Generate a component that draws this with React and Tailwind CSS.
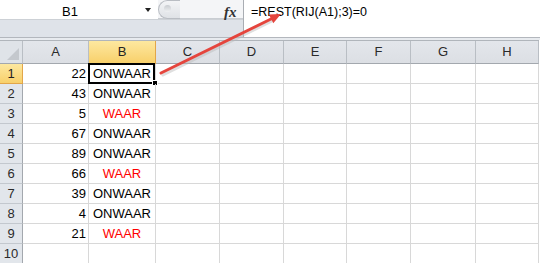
import React from "react";

const cols = ["A", "B", "C", "D", "E", "F", "G", "H"];
const data = [
  [22, false],
  [43, false],
  [5, true],
  [67, false],
  [89, false],
  [66, true],
  [39, false],
  [4, false],
  [21, true],
  [null, null],
];

const font = { fontFamily: '"Liberation Sans", Arial, sans-serif' };

function Header({ label, selected }) {
  return (
    <div
      className={
        "flex items-center justify-center border-r border-b text-[13px] " +
        (selected
          ? "bg-gradient-to-b from-[#fde89f] to-[#f8d06a] border-r-[#e2a649] border-b-[#e2a649] text-[#222]"
          : "bg-gradient-to-b from-[#e3e6eb] to-[#dcdfe4] border-r-[#b9bec4] border-b-[#a3a8ae] text-[#2a2a2a]")
      }
    >
      {label}
    </div>
  );
}

function RowHeader({ n, selected }) {
  return (
    <div
      className={
        "flex items-center justify-center border-r border-b text-[13px] " +
        (selected
          ? "bg-gradient-to-b from-[#fde89f] to-[#f8d06a] border-r-[#e2a649] border-b-[#e2a649] text-[#222]"
          : "bg-[#e2e6eb] border-r-[#a3a8ae] border-b-[#c3c8ce] text-[#2a2a2a]")
      }
    >
      {n}
    </div>
  );
}

export default function App() {
  return (
    <div className="relative w-[540px] h-[263px] overflow-hidden bg-white" style={font}>
      {/* formula bar */}
      <div className="flex h-[38px] border-b border-[#b3b7bd]">
        <div className="flex flex-col w-[243px]">
          <div className="flex h-[19px]">
            <div className="relative w-[158px] bg-white flex items-center">
              <span className="absolute left-[62px] top-[2px] text-[13px] text-black">B1</span>
              <span className="absolute left-[145px] top-[8px] w-0 h-0 border-l-[3px] border-r-[3px] border-t-[4px] border-l-transparent border-r-transparent border-t-[#222]"></span>
            </div>
            <div className="relative flex-1 bg-[#f4f5f7] border-b border-[#c9cdd2]">
              <div className="absolute left-[0px] top-0 w-[22px] h-[19px] rounded-l-full bg-gradient-to-b from-[#f3f4f6] to-[#dfe2e6] border border-r-0 border-[#b9bdc3]">
                <div className="absolute left-[5px] top-[4px] w-[7px] h-[7px] rounded-full bg-gradient-to-b from-[#c9ccd0] to-[#eef0f2]"></div>
              </div>
              <span
                className="absolute left-[66px] top-[1px] text-[15px] italic font-bold text-[#333]"
                style={{ fontFamily: '"Liberation Serif", "Times New Roman", serif' }}
              >
                fx
              </span>
            </div>
          </div>
          <div className="flex-1 bg-[#dfe3e9] border-t border-[#cdd1d6]"></div>
        </div>
        <div className="flex-1 bg-white border-l border-[#a9adb3] pl-[7px] pt-[3px] text-[12.5px] text-black">
          =REST(RIJ(A1);3)=0
        </div>
      </div>
      <div className="h-[2px] bg-[#e8ebef]"></div>

      {/* sheet */}
      <div className="grid grid-cols-[23px_66px_67px_64px_64px_63px_64px_65px_63px] grid-rows-[23px_repeat(10,20px)] border-t border-[#b0b5bb] w-[539px]">
        <div className="relative bg-[#dfe3e8] border-r border-b border-r-[#b9bec4] border-b-[#a3a8ae]">
          <div className="absolute right-[3px] bottom-[3px] w-0 h-0 border-l-[12px] border-t-[12px] border-l-transparent border-t-transparent border-r-0 border-b-0" style={{ borderBottom: "0", borderRight: "0" }}></div>
          <svg className="absolute right-[3px] bottom-[3px]" width="12" height="12" viewBox="0 0 12 12">
            <polygon points="12,0 12,12 0,12" fill="#c4c8cd" />
          </svg>
        </div>
        {cols.map((c) => (
          <Header key={c} label={c} selected={c === "B"} />
        ))}
        {data.map(([num, waar], i) => (
          <React.Fragment key={i}>
            <RowHeader n={i + 1} selected={i === 0} />
            <div className="flex items-center justify-end pr-[2px] pt-[1px] border-r border-b border-[#d8d8d8] text-[13px] text-black">
              {num}
            </div>
            <div className="relative flex items-center justify-center pt-[1px] border-r border-b border-[#d8d8d8] text-[13px]">
              {waar === null ? null : waar ? (
                <span className="text-[#ff0000]">WAAR</span>
              ) : (
                <span className="text-black">ONWAAR</span>
              )}
              {i === 0 && (
                <>
                  <div className="absolute -left-[1px] -top-[1px] w-[67px] h-[21px] border-2 border-black"></div>
                  <div className="absolute -right-[3px] -bottom-[3px] w-[6px] h-[6px] bg-black border border-white"></div>
                </>
              )}
            </div>
            {cols.slice(2).map((c) => (
              <div key={c} className="border-r border-b border-[#d8d8d8]"></div>
            ))}
          </React.Fragment>
        ))}
      </div>

      {/* arrow overlay */}
      <svg className="absolute left-0 top-0 pointer-events-none" width="540" height="263">
        <line x1="162" y1="73.5" x2="272" y2="19" stroke="#b9b9b9" strokeWidth="3" strokeLinecap="round" opacity="0.45" transform="translate(1,1.5)" />
        <line x1="161" y1="73" x2="272" y2="18.5" stroke="#e5453d" strokeWidth="3" strokeLinecap="round" />
        <polygon points="281,14 273.3,23.3 268.9,14.5" fill="#e5453d" />
      </svg>
    </div>
  );
}
